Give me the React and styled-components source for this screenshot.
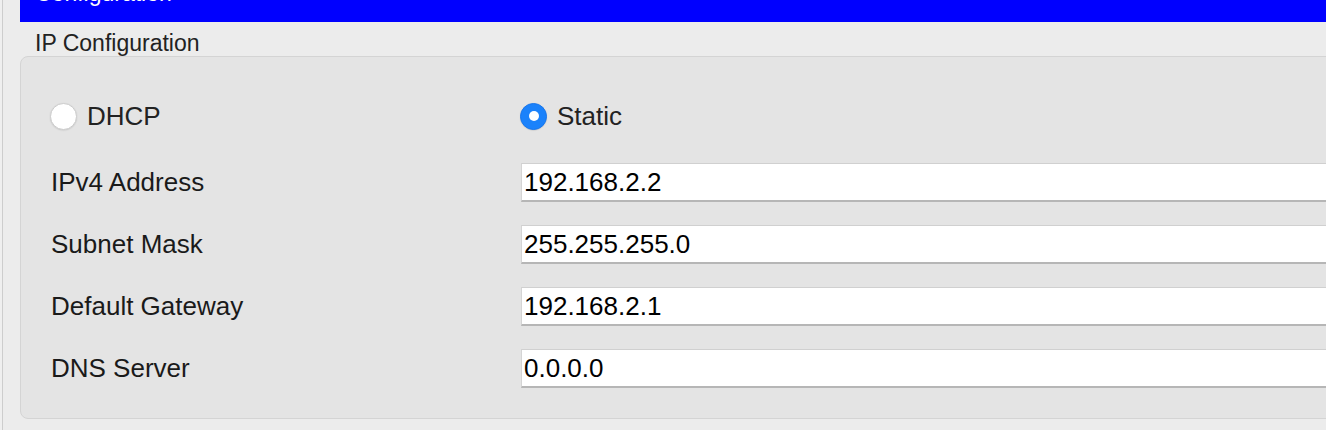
import React from "react";
import styled, { createGlobalStyle } from "styled-components";

const GlobalStyle = createGlobalStyle`
  html, body {
    margin: 0;
    padding: 0;
    background: #efefef;
    font-family: "Liberation Sans", Arial, Helvetica, sans-serif;
  }
  * { box-sizing: border-box; }
`;

const Page = styled.div`
  margin-left: 2px;
  height: 430px;
  border-left: 1px solid #cdcdcd;
  background: #ececec;
  padding-left: 17px;
  overflow: hidden;
  display: flex;
  flex-direction: column;
`;

const TitleBar = styled.div`
  height: 22px;
  flex: none;
  background: #0000ff;
  overflow: hidden;
  padding-left: 15px;
`;

const TitleText = styled.span`
  display: block;
  margin-top: -18px;
  color: #ffffff;
  font-size: 23px;
  line-height: 23px;
`;

const SectionLabel = styled.div`
  height: 34px;
  padding: 10px 0 1px 15px;
  font-size: 23px;
  line-height: 23px;
  color: #222222;
`;

const Panel = styled.div`
  margin-right: -30px;
  background: #e4e4e4;
  border: 1px solid #d4d4d4;
  border-radius: 8px;
  padding: 39px 0 30px 29px;
  display: flex;
  flex-direction: column;
  gap: 27px;
`;

const RadioRow = styled.div`
  display: grid;
  grid-template-columns: 470px 1fr;
  height: 40px;
  align-items: center;
`;

const RadioOption = styled.label`
  display: flex;
  align-items: center;
  gap: 10px;
  font-size: 26px;
  color: #222222;
`;

const RadioCircle = styled.span`
  width: 27px;
  height: 27px;
  border-radius: 50%;
  flex: none;
  display: flex;
  align-items: center;
  justify-content: center;
  background: ${(p) => (p.$checked ? "#1b82fb" : "#ffffff")};
  border: 1px solid ${(p) => (p.$checked ? "#1877ee" : "#cccccc")};
  box-shadow: ${(p) =>
    p.$checked ? "0 0.5px 1px rgba(0,0,0,0.15)" : "0 0.5px 1.5px rgba(0,0,0,0.12)"};
`;

const RadioDot = styled.span`
  width: 10px;
  height: 10px;
  border-radius: 50%;
  background: #ffffff;
`;

const Fields = styled.div`
  display: flex;
  flex-direction: column;
  gap: 23px;
`;

const FieldRow = styled.div`
  display: grid;
  grid-template-columns: 471px 1fr;
  align-items: center;
  height: 39px;
`;

const FieldLabel = styled.span`
  font-size: 26px;
  color: #1a1a1a;
  padding-left: 1px;
`;

const FieldInput = styled.div`
  height: 39px;
  background: #ffffff;
  border-top: 1px solid #d0d0d0;
  border-left: 1px solid #d4d4d4;
  border-bottom: 2px solid #b6b6b6;
  padding-left: 2px;
  display: flex;
  align-items: center;
  font-size: 26px;
  color: #000000;
`;

const fields = [
  { label: "IPv4 Address", value: "192.168.2.2" },
  { label: "Subnet Mask", value: "255.255.255.0" },
  { label: "Default Gateway", value: "192.168.2.1" },
  { label: "DNS Server", value: "0.0.0.0" },
];

export default function App() {
  return (
    <>
      <GlobalStyle />
      <Page>
        <TitleBar>
          <TitleText>Configuration</TitleText>
        </TitleBar>
        <SectionLabel>IP Configuration</SectionLabel>
        <Panel>
          <RadioRow>
            <RadioOption>
              <RadioCircle />
              DHCP
            </RadioOption>
            <RadioOption>
              <RadioCircle $checked>
                <RadioDot />
              </RadioCircle>
              Static
            </RadioOption>
          </RadioRow>
          <Fields>
            {fields.map((f) => (
              <FieldRow key={f.label}>
                <FieldLabel>{f.label}</FieldLabel>
                <FieldInput>{f.value}</FieldInput>
              </FieldRow>
            ))}
          </Fields>
        </Panel>
      </Page>
    </>
  );
}
